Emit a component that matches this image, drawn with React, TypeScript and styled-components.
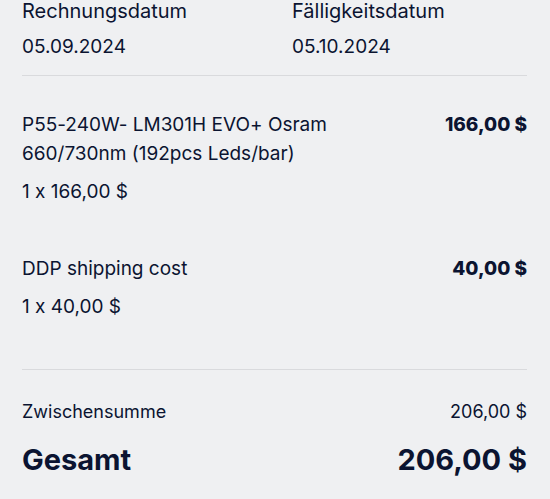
import React from "react";
import styled, { createGlobalStyle } from "styled-components";

const Global = createGlobalStyle`
  html, body {
    margin: 0;
    padding: 0;
    background: #eff0f2;
  }
  body {
    font-family: Inter, "Noto Sans", "Liberation Sans", sans-serif;
    font-feature-settings: "calt" 0;
    color: #0b1431;
    -webkit-font-smoothing: antialiased;
  }
`;

const Page = styled.div`
  width: 550px;
  height: 499px;
  overflow: hidden;
  box-sizing: border-box;
  padding: 0 23px 0 22px;
  display: flex;
  flex-direction: column;
`;

const DateGrid = styled.div`
  display: grid;
  grid-template-columns: 270px 1fr;
  padding-bottom: 17px;
`;

const DateCol = styled.div`
  display: flex;
  flex-direction: column;
  gap: 12px;
`;

const Label = styled.div<{ $title?: boolean }>`
  font-size: ${(p) => (p.$title ? "20px" : "19px")};
  line-height: 23px;
  font-weight: 400;
`;

const Divider = styled.hr<{ $after: number }>`
  border: none;
  height: 1px;
  background: #d9dadd;
  margin: 0 0 ${(p) => p.$after}px 0;
`;

const Item = styled.div<{ $after: number }>`
  display: grid;
  grid-template-columns: 1fr auto;
  column-gap: 24px;
  row-gap: 9px;
  margin-bottom: ${(p) => p.$after}px;
`;

const ItemName = styled.div`
  font-size: 19px;
  line-height: 29px;
  max-width: 340px;
`;

const ItemPrice = styled.div`
  font-size: 19px;
  line-height: 29px;
  font-weight: 800;
  text-align: right;
`;

const ItemQty = styled.div`
  grid-column: 1 / 2;
  font-size: 19px;
  line-height: 29px;
`;

const SumRow = styled.div<{ $big?: boolean }>`
  display: flex;
  justify-content: space-between;
  align-items: baseline;
  font-size: ${(p) => (p.$big ? "29px" : "18px")};
  line-height: ${(p) => (p.$big ? "36px" : "24px")};
  font-weight: ${(p) => (p.$big ? 700 : 400)};
  margin-top: ${(p) => (p.$big ? "18px" : "0")};
`;

const Totals = styled.div`
  padding-top: 30px;
  display: flex;
  flex-direction: column;
`;

export default function App() {
  return (
    <>
      <Global />
      <Page>
        <DateGrid>
          <DateCol>
            <Label $title>Rechnungsdatum</Label>
            <Label>05.09.2024</Label>
          </DateCol>
          <DateCol>
            <Label $title>Fälligkeitsdatum</Label>
            <Label>05.10.2024</Label>
          </DateCol>
        </DateGrid>
        <Divider $after={34} />
        <Item $after={48}>
          <ItemName>P55-240W- LM301H EVO+ Osram 660/730nm (192pcs Leds/bar)</ItemName>
          <ItemPrice>166,00 $</ItemPrice>
          <ItemQty>1 x 166,00 $</ItemQty>
        </Item>
        <Item $after={48}>
          <ItemName>DDP shipping cost</ItemName>
          <ItemPrice>40,00 $</ItemPrice>
          <ItemQty>1 x 40,00 $</ItemQty>
        </Item>
        <Divider $after={0} />
        <Totals>
          <SumRow>
            <span>Zwischensumme</span>
            <span>206,00 $</span>
          </SumRow>
          <SumRow $big>
            <span>Gesamt</span>
            <span>206,00 $</span>
          </SumRow>
        </Totals>
      </Page>
    </>
  );
}
